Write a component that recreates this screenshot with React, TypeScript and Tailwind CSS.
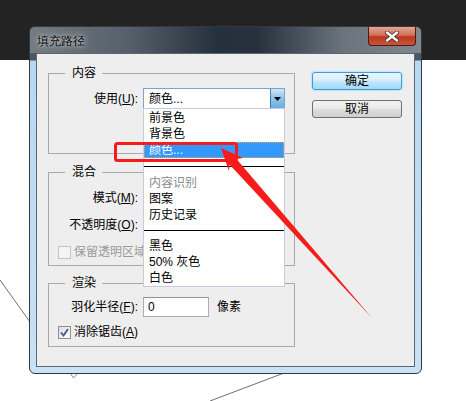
const FONT = "font-['Liberation_Sans','Noto_Sans_CJK_SC',sans-serif]";

type Item = { label: string; kind?: "muted" | "active" | "sep" };

const MENU: Item[] = [
  { label: "前景色" },
  { label: "背景色" },
  { label: "颜色...", kind: "active" },
  { label: "", kind: "sep" },
  { label: "内容识别", kind: "muted" },
  { label: "图案" },
  { label: "历史记录" },
  { label: "", kind: "sep" },
  { label: "黑色" },
  { label: "50% 灰色" },
  { label: "白色" },
];

function Label({ text, hot }: { text: string; hot: string }) {
  return (
    <span className="w-[89px] shrink-0 text-right">
      {text}(<span className="underline">{hot}</span>):
    </span>
  );
}

function Group({
  title,
  className,
  children,
}: {
  title: string;
  className: string;
  children: React.ReactNode;
}) {
  return (
    <fieldset className={`border border-[#a9a9a9] ${className}`}>
      <legend className="ml-[16px] pl-[7px] pr-[6px] leading-[16px]">{title}</legend>
      {children}
    </fieldset>
  );
}

function CheckBox({ checked, disabled }: { checked?: boolean; disabled?: boolean }) {
  return (
    <span
      className={`flex h-[13px] w-[13px] shrink-0 items-center justify-center border ${
        disabled
          ? "border-[#c4c4c4] bg-[#f4f4f4]"
          : "border-[#8e8f8f] bg-[linear-gradient(135deg,#dcdcdc,#ffffff)]"
      }`}
    >
      {checked && (
        <svg width="9" height="9" viewBox="0 0 9 9">
          <path d="M1 4.5 L3.5 7.5 L8 1" fill="none" stroke="#3d5a8e" strokeWidth="1.8" />
        </svg>
      )}
    </span>
  );
}

function Dropdown() {
  return (
    <div className="relative">
      <div className="flex h-[21px] w-[142px] items-center border border-[#7da2ce] bg-white">
        <span className="flex-1 pl-[5px]">颜色...</span>
        <span className="flex h-full w-[14px] items-center justify-center border-l border-[#3c7fb1] bg-[linear-gradient(#cfe7fa,#8ec3ea_50%,#6aaee2)]">
          <svg width="7" height="4" viewBox="0 0 7 4">
            <path d="M0 0 H7 L3.5 4 Z" fill="#000" />
          </svg>
        </span>
      </div>
      <div className="absolute left-0 top-[20px] z-10 flex h-[179px] w-[142px] flex-col border border-[#c5cbe0] bg-white pt-[1px]">
        {MENU.map((m, i) =>
          m.kind === "sep" ? (
            <div key={i} className={`${i === 3 ? "my-[8px]" : "my-[7px]"} h-px bg-black`} />
          ) : (
            <div
              key={i}
              className={`h-[16px] pl-[5px] leading-[16px] ${
                m.kind === "active"
                  ? "bg-[#3399ff] text-white outline outline-1 outline-dotted -outline-offset-1 outline-[#e3a75c]"
                  : m.kind === "muted"
                    ? "text-[#8a8a8a]"
                    : "text-black"
              }`}
            >
              {m.label}
            </div>
          ),
        )}
      </div>
    </div>
  );
}

function Dialog() {
  return (
    <div className="absolute left-[29px] top-[26px] flex h-[348px] w-[393px] flex-col rounded-[6px] border border-[#34393f] bg-[linear-gradient(180deg,#5f676f_0px,#4c555e_33px,#b8d8f2_34px,#c8e2f6_100%)] px-[6px] pb-[6px]">
      <div className="-mx-[6px] flex h-[26px] items-start justify-between rounded-t-[5px] bg-[linear-gradient(90deg,#737b83_0%,#56606a_25%,#24303b_48%,#26313c_58%,#6b747d_80%,#7f878f_100%)] pl-[7px] pr-[5px]">
        <span className="mt-[6px] text-[12px] leading-[16px] text-black [text-shadow:0_0_6px_rgba(255,255,255,0.8),0_0_2px_rgba(255,255,255,0.6)]">
          填充路径
        </span>
        <span className="flex h-[19px] w-[48px] items-center justify-center rounded-b-[4px] border border-t-0 border-[#4d1a12] bg-[linear-gradient(#e6a593_0%,#d2705a_45%,#b8391f_55%,#c9553a_100%)]">
          <svg width="14" height="11" viewBox="0 0 14 11">
            <path d="M2 1.5 L12 9.5 M12 1.5 L2 9.5" stroke="#3a2a2a" strokeWidth="4" strokeLinecap="round" />
            <path d="M2 1.5 L12 9.5 M12 1.5 L2 9.5" stroke="#ffffff" strokeWidth="2.4" strokeLinecap="round" />
          </svg>
        </span>
      </div>

      <div className={`flex flex-1 border border-[#5b6670] bg-[#eeeeee] text-[12px] leading-[16px] text-black ${FONT}`}>
        <div className="ml-[11px] flex w-[247px] flex-col pt-[11px]">
          <Group title="内容" className="h-[89px]">
            <div className="mt-[7px] flex items-center gap-[5px]">
              <Label text="使用" hot="U" />
              <Dropdown />
            </div>
          </Group>

          <Group title="混合" className="mt-[10px] h-[102px]">
            <div className="mt-[8px] flex h-[20px] items-center">
              <Label text="模式" hot="M" />
            </div>
            <div className="mt-[7px] flex h-[20px] items-center">
              <Label text="不透明度" hot="O" />
            </div>
            <div className="mt-[7px] flex h-[20px] items-center gap-[3px] pl-[9px] text-[#9a9a9a]">
              <CheckBox disabled />
              <span>保留透明区域</span>
            </div>
          </Group>

          <Group title="渲染" className="mt-[9px] h-[72px]">
            <div className="mt-[6px] flex items-center">
              <Label text="羽化半径" hot="F" />
              <div className="ml-[5px] flex h-[20px] w-[66px] items-center border border-[#abadb3] border-t-[#8f949c] bg-white pl-[4px]">
                0
              </div>
              <span className="ml-[8px]">像素</span>
            </div>
            <div className="mt-[7px] flex h-[16px] items-center gap-[3px] pl-[9px]">
              <CheckBox checked />
              <span>
                消除锯齿(<span className="underline">A</span>)
              </span>
            </div>
          </Group>
        </div>

        <div className="ml-[17px] mt-[18px] flex w-[90px] flex-col gap-[10px]">
          <button className="h-[18px] rounded-[3px] border border-[#3c9be0] bg-[linear-gradient(#eaf6fd_0%,#d7effc_45%,#bde6fd_55%,#a6d9f4_100%)] leading-[16px] shadow-[0_0_2px_#5ec4f5]">
            确定
          </button>
          <button className="h-[18px] rounded-[3px] border border-[#707070] bg-[linear-gradient(#f2f2f2_0%,#ebebeb_45%,#dddddd_55%,#cfcfcf_100%)] leading-[16px]">
            取消
          </button>
        </div>
      </div>
    </div>
  );
}

export default function App() {
  return (
    <div className="relative h-[401px] w-[466px] overflow-hidden bg-white">
      <div className="h-[60px] bg-[#232323]" />

      <svg className="absolute inset-0" width="466" height="401" viewBox="0 0 466 401">
        <path d="M0 280 L30 322" stroke="#6e6e6e" strokeWidth="1" fill="none" />
        <path d="M70 373 L73.5 378 L78 373" stroke="#8a8a8a" strokeWidth="1" fill="none" />
        <path d="M210 401 L284 373" stroke="#6e6e6e" strokeWidth="1" fill="none" />
      </svg>

      <Dialog />

      <svg className="pointer-events-none absolute inset-0 z-20" width="466" height="401" viewBox="0 0 466 401">
        <rect x="115.5" y="143.5" width="121" height="17" rx="2" fill="none" stroke="#f61c1c" strokeWidth="3" />
        <polygon
          points="221,148 243,158 236.5,159 372,318 229.5,164.5 229,171"
          fill="#f61c1c"
        />
      </svg>
    </div>
  );
}
